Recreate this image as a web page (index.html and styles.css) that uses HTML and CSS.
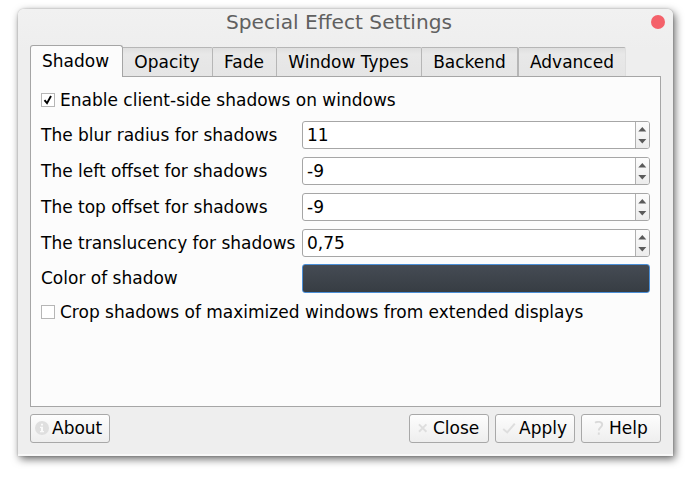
FILE: index.html
```html
<!DOCTYPE html>
<html lang="en">
<head>
<meta charset="utf-8">
<title>Special Effect Settings</title>
<link rel="stylesheet" href="styles.css">
</head>
<body>
<div class="window">
  <header class="titlebar"><h1>Special Effect Settings</h1><span class="close-dot"></span></header>
  <nav class="tabs">
    <span class="tab active">Shadow</span>
    <span class="tab opacity">Opacity</span>
    <span class="tab fade">Fade</span>
    <span class="tab types">Window Types</span>
    <span class="tab backend">Backend</span>
    <span class="tab advanced">Advanced</span>
  </nav>
  <main class="panel">
    <div class="check"><span class="box"><svg width="12" height="12" viewBox="0 0 12 12"><path d="M2.5 6.2 L5 9.2 L9 2" fill="none" stroke="#000" stroke-width="1.9"/></svg></span><span class="check-text">Enable client-side shadows on windows</span></div>
    <div class="form">
      <span class="label">The blur radius for shadows</span>
      <div class="spin"><span class="value">11</span><span class="arrows"><svg width="13" height="26" viewBox="0 0 13 26"><path d="M2.3 9.5 L6.3 5.1 L10.3 9.5Z M2.3 17 L6.3 21.4 L10.3 17Z" fill="#5a5a5a"/></svg></span></div>
      <span class="label">The left offset for shadows</span>
      <div class="spin"><span class="value">-9</span><span class="arrows"><svg width="13" height="26" viewBox="0 0 13 26"><path d="M2.3 9.5 L6.3 5.1 L10.3 9.5Z M2.3 17 L6.3 21.4 L10.3 17Z" fill="#5a5a5a"/></svg></span></div>
      <span class="label">The top offset for shadows</span>
      <div class="spin"><span class="value">-9</span><span class="arrows"><svg width="13" height="26" viewBox="0 0 13 26"><path d="M2.3 9.5 L6.3 5.1 L10.3 9.5Z M2.3 17 L6.3 21.4 L10.3 17Z" fill="#5a5a5a"/></svg></span></div>
      <span class="label">The translucency for shadows</span>
      <div class="spin"><span class="value">0,75</span><span class="arrows"><svg width="13" height="26" viewBox="0 0 13 26"><path d="M2.3 9.5 L6.3 5.1 L10.3 9.5Z M2.3 17 L6.3 21.4 L10.3 17Z" fill="#5a5a5a"/></svg></span></div>
      <span class="label color">Color of shadow</span>
      <div class="swatch"></div>
    </div>
    <div class="check"><span class="box"></span><span class="check-text">Crop shadows of maximized windows from extended displays</span></div>
  </main>
  <footer class="buttons">
    <span class="btn about"><svg width="14" height="14" viewBox="0 0 14 14"><circle cx="7" cy="7" r="7" fill="#dfdfdf"/><path d="M6 2.7H8V4.5H6ZM5 5.7H8V10H9V11.2H5V10H6V6.9H5Z" fill="#fafafa"/></svg><span class="btn-text">About</span></span>
    <span class="btn close"><svg width="14" height="14" viewBox="0 0 14 14"><path d="M3 3.4L10.4 10.8M10.4 3.4L3 10.8" fill="none" stroke="#dedede" stroke-width="2"/></svg><span class="btn-text">Close</span></span>
    <span class="btn apply"><svg width="14" height="14" viewBox="0 0 14 14"><path d="M1.2 8L5.2 11.4L12.8 2.6" fill="none" stroke="#dedede" stroke-width="2"/></svg><span class="btn-text">Apply</span></span>
    <span class="btn help"><svg width="14" height="14" viewBox="0 0 14 14"><path d="M3 1.8C5.5 .3 10.2 .3 10.2 3.8C10.2 6.3 6.8 6.2 6.8 9.6M6.8 11.6V13.8" fill="none" stroke="#dadada" stroke-width="1.9"/></svg><span class="btn-text">Help</span></span>
  </footer>
</div>
</body>
</html>
```
FILE: styles.css
```css
* { box-sizing: border-box; }
body {
  margin: 0;
  width: 685px;
  height: 478px;
  overflow: hidden;
  background: #fff;
  font: 17px/20px "DejaVu Sans", sans-serif;
  color: #000;
  white-space: nowrap;
}
svg { display: block; flex: none; }
.window {
  width: 655px;
  height: 447px;
  margin: 9px 0 0 18px;
  padding: 0 12px;
  background: linear-gradient(#f1f1f1, #eee 40px);
  border-radius: 6px 6px 0 0;
  border-bottom: 2px solid #f8f8f8;
  box-shadow: 2px 3px 9px rgba(0, 0, 0, .6), 0 0 2px rgba(0, 0, 0, .25);
  display: flex;
  flex-direction: column;
}
.titlebar {
  height: 36px;
  flex: none;
  display: flex;
  justify-content: center;
  position: relative;
}
h1 {
  margin: 0 13px 0 0;
  font-size: 20.15px;
  line-height: 26px;
  font-weight: 400;
  color: #606060;
}
.close-dot {
  position: absolute;
  right: -4px;
  top: 6px;
  width: 14px;
  height: 14px;
  border-radius: 50%;
  background: #f4616a;
}
.tabs { height: 31px; flex: none; display: flex; align-items: flex-end; }
.tab {
  height: 29px;
  padding-right: 1px;
  border: 1px solid #b6b6b6;
  border-width: 1px 1px 0 0;
  border-radius: 0 2px 0 0;
  background: linear-gradient(#dfdfdf, #e8e8e8 6px, #e5e5e5);
  text-align: center;
  line-height: 28px;
}
.tab.active {
  width: 93px;
  height: 32px;
  padding-right: 2px;
  margin-bottom: -1px;
  border-color: #a5a5a5;
  border-left-width: 1px;
  border-radius: 3px 3px 0 0;
  background: #fcfcfc;
  line-height: 31px;
  z-index: 1;
}
.opacity { width: 90px; }
.fade { width: 64px; }
.types { width: 145px; }
.backend { width: 97px; padding-right: 0; border-right-width: 2px; }
.advanced { width: 107px; padding-right: 0; border-right-color: #dedede; }
.panel {
  width: 631px;
  height: 331px;
  flex: none;
  padding: 13px 10px 0;
  border: 1px solid #a6a6a6;
  background: #fcfcfc;
}
.check { height: 20px; display: flex; align-items: center; }
.box {
  width: 14px;
  height: 14px;
  margin-right: 5px;
  border: 1px solid #b6b6b6;
  background: #fff;
}
.form {
  display: grid;
  grid-template-columns: 261px 348px;
  grid-template-rows: repeat(4, 28px) 29px;
  row-gap: 8px;
  margin: 11px 0 8px;
  align-items: center;
}
.form .color { margin-top: -4px; }
.form .swatch { margin-top: -2px; }
.spin {
  height: 28px;
  display: flex;
  border: 1px solid #a6a6a6;
  border-radius: 3px;
  background: #fff;
}
.value { flex: 1; padding-left: 4px; line-height: 26px; }
.arrows {
  width: 14px;
  border-left: 1px solid #b0b0b0;
  border-radius: 0 2px 2px 0;
  background: linear-gradient(#fcfcfc, #ececec);
}
.swatch {
  height: 29px;
  border: 1px solid #4b8fd7;
  border-radius: 3px;
  background: linear-gradient(#454b54, #373d43);
}
.buttons { display: flex; gap: 6px; padding-top: 7px; }
.btn {
  width: 80px;
  height: 29px;
  display: flex;
  align-items: center;
  border: 1px solid #a8a8a8;
  border-radius: 3px;
  background: linear-gradient(#fdfdfd, #eee);
  padding-left: 4px;
}
.btn svg { margin: -1px 3px 0 0; }
.btn-text { line-height: 20px; margin-bottom: 2px; }
.about { margin-right: 293px; }
.close { padding-left: 6px; }
.apply { padding-left: 6px; }
.help { padding-left: 10px; }
```
